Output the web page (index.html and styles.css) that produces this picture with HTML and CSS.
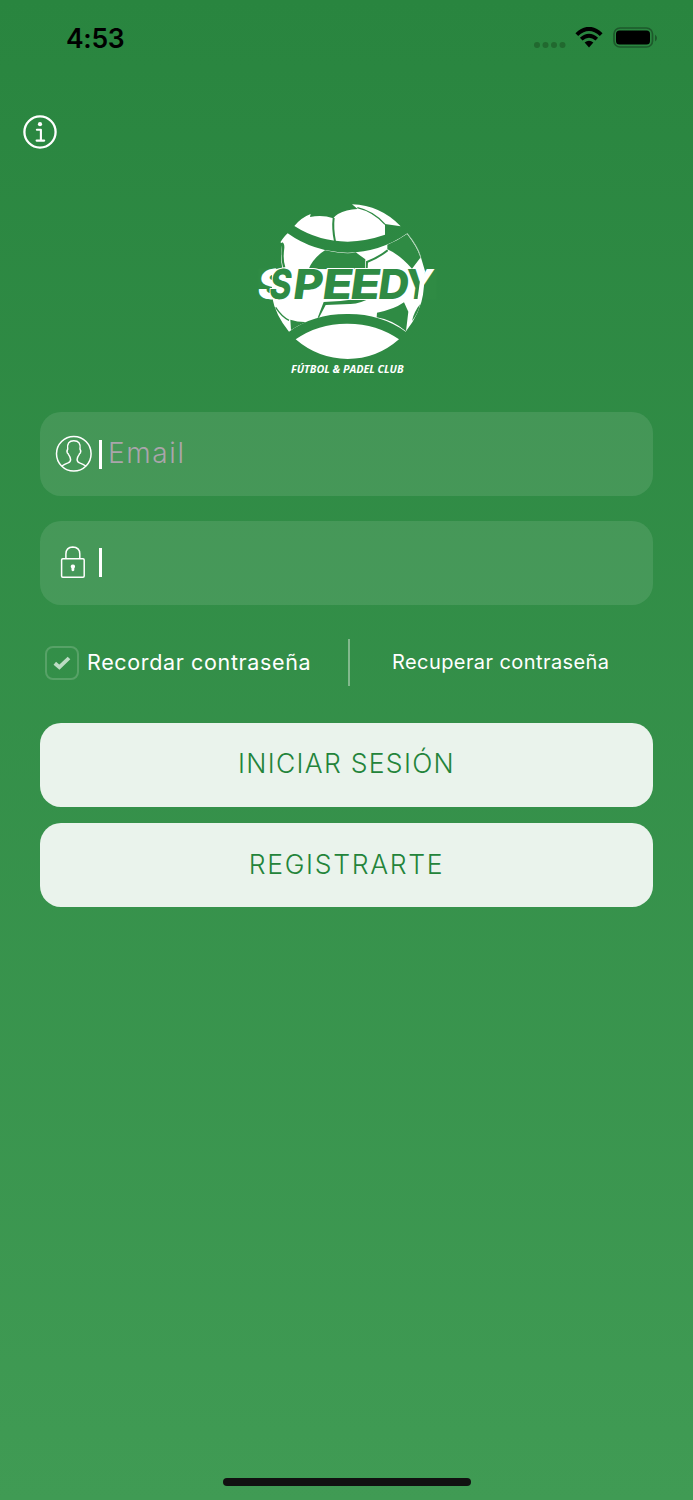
FILE: index.html
```html
<!DOCTYPE html>
<html lang="es">
<head>
    <meta charset="UTF-8">
    <meta name="viewport" content="width=device-width, initial-scale=1.0">
    <title>Speedy</title>
    <link rel="stylesheet" href="styles.css">
</head>
<body>

    <!-- Status bar -->
    <header class="status-bar">
        <span class="time">4:53</span>
        <div class="status-icons">
            <svg class="signal" width="32" height="6" viewBox="0 0 32 6">
                <circle cx="3" cy="3" r="3"/><circle cx="11.5" cy="3" r="3"/><circle cx="20" cy="3" r="3"/><circle cx="28.5" cy="3" r="3"/>
            </svg>
            <svg class="wifi" width="28" height="21" viewBox="0 0 28 21">
                <path d="M1.8 7.6 Q14 -3.8 26.2 7.6" stroke-width="4"/>
                <path d="M6.2 12.2 Q14 5.2 21.8 12.2" stroke-width="3.8"/>
                <path class="wifi-dot" d="M9.6 15.6 Q14 12 18.4 15.6 L14 20.4 Z"/>
            </svg>
            <svg width="44" height="22" viewBox="0 0 44 22">
                <rect class="battery-case" x="1" y="1" width="38.5" height="19" rx="6"/>
                <rect x="3" y="3.6" width="34" height="14" rx="3.5"/>
                <path class="battery-tip" d="M42 7.5 Q44 9 44 11 Q44 13 42 14.5 Z"/>
            </svg>
        </div>
    </header>

    <!-- Info button -->
    <a class="info" href="#" aria-label="Info">
        <svg width="34" height="34" viewBox="0 0 34 34">
            <circle cx="17" cy="17" r="15.6" stroke-width="2.3"/>
            <path d="M13.9 14.8 H17.9 V25.3 M13.6 25.6 H21.2" stroke-width="2.1"/>
            <circle class="dot" cx="17" cy="9.2" r="2.1"/>
        </svg>
    </a>

    <!-- Logo -->
    <div class="logo">
        <svg width="195" height="190" viewBox="0 0 585 570">
            <defs>
                <clipPath id="outside">
                    <path d="M0 200 H78 V340 H0 Z"/>
                </clipPath>
                <clipPath id="inside">
                    <path d="M440 200 H490 L511 250 L500 330 H440 Z"/>
                </clipPath>
            </defs>
            <!-- top cap -->
            <path class="white" d="M133 93 Q153 68 182 57 L180 66 Q217 58 250 70 Q253 64 264 57 Q288 44 323 42 L306 28 Q392 31 452 94 L405 87 L405 119 Q350 138 293 140 Q205 139 133 93 Z"/>
            <path class="seam" d="M251 69 Q247 101 255 139" stroke-width="6"/>
            <path class="seam" d="M322 38 Q370 49 405 88" stroke-width="4"/>
            <!-- body -->
            <path class="white" d="M113 115 Q191 171 293 173 Q391 172 472 115 Q507 158 514 191 L525 228 L521 290 Q511 355 467 410 Q391 356 293 357 Q192 356 117 410 Q76 360 66 305 L66 223 L97 220 Q89 184 97 145 L91 142 Q104 122 113 115 Z"/>
            <path class="green" d="M412 149 Q443 137 471 117 Q503 158 511 188 L486 221 Q448 178 412 163 Z"/>
            <path class="green" d="M176 222 Q190 188 225 166 Q292 180 317 172 L346 193 L345 223 Z"/>
            <path class="seam" d="M350 222 L351 201 Q390 185 413 166" stroke-width="6"/>
            <path class="green" d="M96 142 Q104 145 103 159 Q98 194 106 217 L99 218 Q91 183 96 150 Z"/>
            <path class="green" d="M203 368 L221 321 Q280 319 338 310 L370 304 Q330 328 299 327 L227 330 L207 368 Z"/>
            <path class="green" d="M381 353 Q431 344 462 322 L475 350 L468 409 Q426 374 380 367 Z"/>
            <path class="green" d="M121 374 Q145 382 168 381 Q145 391 123 405 Z"/>
            <path class="seam" d="M77 337 Q95 365 117 376" stroke-width="4"/>
            <path class="green" d="M486 378 Q492 350 510 328 Q505 355 486 378 Z"/>
            <path class="edge" d="M472 115 Q507 158 513 191"/>
            <!-- bottom cap -->
            <path class="white" d="M137 433 Q205 385 293 386 Q382 387 447 433 Q380 492 293 492 Q204 491 137 433 Z"/>
            <!-- wordmark -->
            <path class="green" d="M25 220 H66 L66 314 H25 Z"/>
            <path class="green" d="M526 222 H560 V314 H519 L522 270 Z"/>
            <g clip-path="url(#outside)">
                <text class="letter-out" transform="translate(0 312) skewX(-8)" x="18" textLength="90" lengthAdjust="spacingAndGlyphs">S</text>
            </g>
            <g class="wordmark" transform="translate(0 312) skewX(-8)">
                <text x="54" textLength="66" lengthAdjust="spacingAndGlyphs">S</text>
                <text x="125" textLength="89" lengthAdjust="spacingAndGlyphs">P</text>
                <text x="213" textLength="90" lengthAdjust="spacingAndGlyphs">E</text>
                <text x="296" textLength="90" lengthAdjust="spacingAndGlyphs">E</text>
                <text x="380" textLength="92" lengthAdjust="spacingAndGlyphs">D</text>
            </g>
            <text class="letter-out" transform="translate(0 312) skewX(-8)" x="458" textLength="85" lengthAdjust="spacingAndGlyphs">Y</text>
            <g clip-path="url(#inside)">
                <text class="letter-in" transform="translate(0 312) skewX(-8)" x="458" textLength="85" lengthAdjust="spacingAndGlyphs">Y</text>
            </g>
            <text class="tagline" x="123" y="533" textLength="338" lengthAdjust="spacingAndGlyphs">FÚTBOL &amp; PADEL CLUB</text>
        </svg>
    </div>

    <!-- Login form -->
    <form class="login">
        <label class="field">
            <svg width="38" height="38" viewBox="0 0 38 38">
                <circle cx="18.8" cy="18.7" r="17.3"/>
                <path d="M6.8 31 Q9.5 29.2 13 27.9 Q15.6 26.8 15.6 24.4 Q15.6 22.4 13.6 19.6 Q13.2 18.4 12.3 17.8 Q11.6 15.8 12.7 14 Q11.6 5.8 18.8 5.8 Q26.2 5.8 25 14 Q26.2 15.8 25.4 17.8 Q24.5 18.4 24.1 19.6 Q22.1 22.4 22.1 24.4 Q22.1 26.8 24.6 27.9 Q28.2 29.2 30.8 31"/>
            </svg>
            <span class="bar"></span>
            <input class="email" type="email" placeholder="Email">
        </label>
        <label class="field">
            <svg width="38" height="38" viewBox="0 0 38 38">
                <rect x="6.6" y="14.8" width="22.6" height="18.4" rx="1.2"/>
                <path d="M10.9 14.6 V10 Q11.1 3.3 17.7 3.1 Q24.7 3.3 24.8 10 V14.6"/>
                <path class="keyhole" d="M17.9 20.4 A2.2 2.2 0 0 1 19.3 24.3 V26.3 Q17.9 28.3 16.5 26.3 V24.3 A2.2 2.2 0 0 1 17.9 20.4 Z"/>
            </svg>
            <span class="bar"></span>
            <input type="password">
        </label>

        <div class="options">
            <div class="remember">
                <span class="checkbox">
                    <svg width="18" height="14" viewBox="0 0 18 14"><path d="M1.8 7.2 L6.4 11.2 L16 2"/></svg>
                </span>
                <span class="remember-text">Recordar contraseña</span>
            </div>
            <a class="recover" href="#">Recuperar contraseña</a>
        </div>

        <button class="button sign-in" type="button">INICIAR SESIÓN</button>
        <button class="button sign-up" type="button">REGISTRARTE</button>
    </form>

    <!-- Home indicator -->
    <div class="home-indicator"></div>

</body>
</html>
```
FILE: styles.css
```css
* {
    box-sizing: border-box;
}

body {
    margin: 0;
    height: 1500px;
    display: flex;
    flex-direction: column;
    font-family: Inter, "Liberation Sans", sans-serif;
    color: #fff;
    background: linear-gradient(#29853f, #409b54);
    overflow: hidden;
}

svg {
    display: block;
    flex-shrink: 0;
}

.status-bar {
    display: flex;
    justify-content: space-between;
    height: 76px;
    padding: 0 36px 0 66px;
    color: #000;
}

.time {
    font-size: 26.5px;
    font-weight: 600;
    line-height: 76px;
    letter-spacing: -0.3px;
}

.status-icons {
    display: flex;
    align-items: flex-start;
    padding-top: 27px;
}

.signal {
    margin: 15px 9px 0 0;
    fill: #21692f;
}

.wifi {
    margin-right: 10px;
    fill: none;
    stroke: #000;
}

.wifi-dot {
    fill: #000;
    stroke: none;
}

.battery-case {
    fill: none;
    stroke: #1d592b;
    stroke-width: 1.7;
}

.battery-tip {
    fill: #1d592b;
}

.info {
    width: 34px;
    margin: 39px 0 0 23px;
}

.info svg {
    fill: none;
    stroke: #fff;
    stroke-linecap: round;
    stroke-linejoin: round;
}

.info .dot {
    fill: #fff;
    stroke: none;
}

/* Logo */
.logo {
    margin: 46px 0 0 250px;
}

.white {
    fill: #fff;
}

.green {
    fill: #2f8b44;
}

.seam {
    fill: none;
    stroke: #2f8b44;
}

.edge {
    fill: none;
    stroke: #7db889;
    stroke-width: 2;
}

.wordmark,
.letter-in,
.letter-out {
    font-size: 124px;
    font-weight: 800;
    fill: #2f8b44;
}

.wordmark {
    stroke: #fff;
    stroke-width: 6;
    paint-order: stroke;
}

.letter-out {
    fill: #fff;
}

.tagline {
    font-family: "Open Sans", sans-serif;
    font-size: 33px;
    font-weight: 700;
    font-style: italic;
    fill: #fff;
}

/* Form */
.login {
    display: flex;
    flex-direction: column;
    margin: 27px 40px 0;
}

.field {
    display: flex;
    align-items: center;
    height: 84px;
    margin-bottom: 24.5px;
    padding-left: 15px;
    border-radius: 21px;
    background: rgba(255, 255, 255, 0.1);
}

.field svg {
    fill: none;
    stroke: #fff;
    stroke-width: 1.5;
}

.field .keyhole {
    fill: #fff;
    stroke: none;
}

.bar {
    width: 3px;
    height: 29px;
    margin-left: 6px;
    background: #fff;
}

.field input {
    flex: 1;
    min-width: 0;
    margin-left: 6px;
    padding: 0 0 3px;
    border: 0;
    outline: 0;
    background: none;
    font: 300 28px Inter, sans-serif;
    letter-spacing: 1.6px;
    color: #fff;
}

.field input::placeholder {
    color: #aaa5ab;
    opacity: 1;
}

.options {
    display: flex;
    align-items: center;
    height: 47px;
    margin: 10px 0 36.5px;
}

.remember {
    display: flex;
    align-items: center;
    width: 310px;
    height: 47px;
    padding-left: 5px;
    border-right: 2px solid #82b98d;
}

.checkbox {
    display: flex;
    align-items: center;
    justify-content: center;
    width: 34px;
    height: 34px;
    margin-right: 8px;
    border: 2px solid #57a267;
    border-radius: 8px;
}

.checkbox path {
    fill: none;
    stroke: #bddcc4;
    stroke-width: 3.8;
}

.remember-text {
    padding-bottom: 2px;
    font-size: 21.5px;
    letter-spacing: 0.64px;
    white-space: nowrap;
}

.recover {
    margin-left: 42px;
    padding-bottom: 1px;
    font-size: 20px;
    letter-spacing: 0.42px;
    color: #fff;
    text-decoration: none;
    white-space: nowrap;
}

.button {
    height: 84px;
    margin-bottom: 16.5px;
    padding: 0 0 3px;
    border: 0;
    border-radius: 21px;
    background: #eaf3ec;
    font: 300 26.5px Inter, sans-serif;
    color: #23843a;
}

.sign-in {
    letter-spacing: 1.3px;
}

.sign-up {
    letter-spacing: 1.7px;
}

.home-indicator {
    width: 248px;
    height: 8px;
    margin: auto auto 14px 222.5px;
    border-radius: 4px;
    background: #111;
}
```
